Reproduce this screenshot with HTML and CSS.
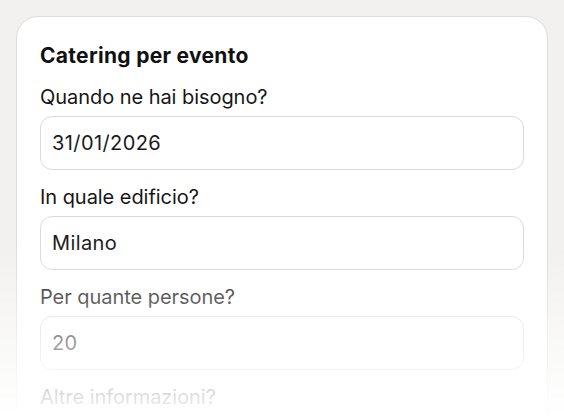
FILE: index.html
```html
<!DOCTYPE html>
<html lang="it">
<head>
<meta charset="utf-8">
<title>Catering per evento</title>
<link rel="stylesheet" href="styles.css">
</head>
<body>
<main class="page">
  <section class="card">
    <h2 class="card-title">Catering per evento</h2>
    <div class="field">
      <label class="field-label">Quando ne hai bisogno?</label>
      <div class="input">31/01/2026</div>
    </div>
    <div class="field">
      <label class="field-label">In quale edificio?</label>
      <div class="input">Milano</div>
    </div>
    <div class="field">
      <label class="field-label">Per quante persone?</label>
      <div class="input">20</div>
    </div>
    <div class="field">
      <label class="field-label">Altre informazioni?</label>
      <div class="input input-area"></div>
    </div>
  </section>
</main>
<div class="fade"></div>
</body>
</html>
```

FILE: styles.css
```css
html, body {
  margin: 0;
  padding: 0;
  height: 100%;
  overflow: hidden;
}
body {
  background: #f2f1ef;
  font-family: "Inter", "Noto Sans", sans-serif;
  color: #141414;
}
.page {
  padding: 16px 16px 0 16px;
}
.card {
  background: #ffffff;
  border: 1px solid #dedddb;
  border-radius: 22px;
  padding: 27px 23px 40px 23px;
  display: flex;
  flex-direction: column;
  gap: 15px;
}
.card-title {
  margin: 0 0 2px 0;
  font-size: 21px;
  line-height: 24px;
  font-weight: 700;
  letter-spacing: 0.3px;
  color: #111111;
}
.field {
  display: flex;
  flex-direction: column;
  gap: 7px;
}
.field-label {
  font-size: 20px;
  line-height: 24px;
  font-weight: 400;
  letter-spacing: -0.05px;
  color: #161616;
}
.input {
  box-sizing: border-box;
  height: 54px;
  border: 1px solid #dadada;
  border-radius: 12px;
  padding: 0 11px;
  display: flex;
  align-items: center;
  font-size: 20px;
  letter-spacing: 0.4px;
  color: #1a1a1a;
}
.input-area {
  height: 120px;
}
.fade {
  position: fixed;
  left: 0;
  right: 0;
  top: 243px;
  bottom: 0;
  pointer-events: none;
  background: linear-gradient(to bottom, rgba(255,255,255,0) 0%, rgba(255,255,255,0.97) 100%);
}
```
